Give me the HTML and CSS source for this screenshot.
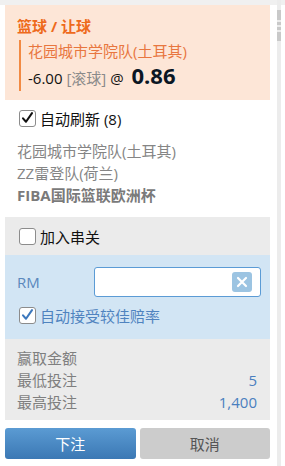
FILE: index.html
```html
<!DOCTYPE html>
<html lang="zh">
<head>
<meta charset="utf-8">
<link rel="stylesheet" href="styles.css">
</head>
<body>
<div class="topbar"></div>
<div class="panel">
  <section class="bet">
    <div class="title">篮球 / 让球</div>
    <div class="selection">
      <div class="team">花园城市学院队(土耳其)</div>
      <div class="odds-line"><span class="hdp">-6.00</span> <span class="live">[滚球]</span> <span class="at">@</span> <span class="odds">0.86</span></div>
    </div>
  </section>
  <section class="info">
    <label class="check-row"><span class="box"><svg viewBox="0 0 16 16" width="16" height="16"><path d="M3.2 8.4 L6.4 12 L12.8 2.8" fill="none" stroke="#111" stroke-width="2.2" stroke-linecap="round" stroke-linejoin="round"/></svg></span><span>自动刷新 (8)</span></label>
    <div class="match">
      <div>花园城市学院队(土耳其)</div>
      <div>ZZ雷登队(荷兰)</div>
      <div class="league">FIBA国际篮联欧洲杯</div>
    </div>
  </section>
  <section class="parlay">
    <label class="check-row"><span class="box"></span><span>加入串关</span></label>
  </section>
  <section class="stake">
    <div class="stake-row">
      <span class="rm">RM</span>
      <div class="input"><span class="clear"><svg viewBox="0 0 20 20" width="20" height="20"><path d="M6 6 L14 14 M14 6 L6 14" stroke="#fff" stroke-width="2.2" stroke-linecap="round"/></svg></span></div>
    </div>
    <label class="check-row blue"><span class="box"><svg viewBox="0 0 16 16" width="16" height="16"><path d="M3.2 8.4 L6.4 12 L12.8 2.8" fill="none" stroke="#3c78bd" stroke-width="2.2" stroke-linecap="round" stroke-linejoin="round"/></svg></span><span>自动接受较佳赔率</span></label>
  </section>
  <section class="limits">
    <div class="lim"><span>赢取金额</span><span class="val"></span></div>
    <div class="lim"><span>最低投注</span><span class="val">5</span></div>
    <div class="lim"><span>最高投注</span><span class="val">1,400</span></div>
  </section>
  <div class="buttons">
    <button class="btn primary">下注</button>
    <button class="btn secondary">取消</button>
  </div>
</div>
<div class="scrollbar">
  <div class="sb-block a"></div>
  <div class="sb-line"></div>
  <div class="sb-line"></div>
  <div class="sb-block b"></div>
</div>
</body>
</html>
```
FILE: styles.css
```css
html, body {
  margin: 0;
  padding: 0;
  background: #fff;
}
body {
  font-family: "Open Sans", "Noto Sans CJK SC", sans-serif;
  font-size: 15px;
  color: #222;
  width: 285px;
  height: 466px;
  overflow: hidden;
  position: relative;
}
.topbar {
  height: 5px;
  background: #f0f0f0;
}
.panel {
  width: 265px;
  margin-left: 5px;
}
.bet {
  background: #fde6d7;
  height: 95px;
  padding: 11px 12px 0 12px;
  box-sizing: border-box;
}
.title {
  color: #ee6a1c;
  font-weight: bold;
  font-size: 15px;
  line-height: 20px;
}
.selection {
  margin-top: 4px;
  margin-left: 2px;
  border-left: 2px solid #f28a43;
  padding-left: 7px;
}
.team {
  color: #e8763f;
  line-height: 22px;
}
.odds-line {
  line-height: 26px;
  color: #111;
  font-size: 15px;
}
.live {
  color: #8a8a8a;
}
.at {
  margin-right: 4px;
}
.odds {
  font-weight: bold;
  font-size: 22px;
  color: #0b1624;
}
.info {
  padding: 8px 12px 11px 12px;
}
.check-row {
  display: flex;
  align-items: center;
  height: 20px;
  gap: 4px;
  margin-left: 2px;
  color: #111;
}
.box {
  width: 15px;
  height: 15px;
  border: 1px solid #8c8c8c;
  border-radius: 3px;
  background: #fff;
  display: flex;
  align-items: center;
  justify-content: center;
}
.box svg {
  display: block;
}
.match {
  margin-top: 12px;
  color: #858585;
  line-height: 22px;
}
.league {
  font-weight: bold;
  color: #7a7a7a;
}
.parlay {
  background: #ebebeb;
  padding: 9px 12px;
}
.stake {
  background: #d2e5f4;
  padding: 12px 9px 14px 12px;
}
.stake-row {
  display: flex;
  align-items: center;
  justify-content: space-between;
}
.rm {
  color: #5a88bd;
}
.input {
  width: 167px;
  height: 30px;
  box-sizing: border-box;
  border: 1px solid #5b9bd5;
  border-radius: 3px;
  background: #fff;
  display: flex;
  align-items: center;
  justify-content: flex-end;
  padding-right: 8px;
}
.clear {
  width: 20px;
  height: 20px;
  border-radius: 3px;
  background: #9cc4e2;
  display: block;
}
.clear svg {
  display: block;
}
.check-row.blue {
  margin-top: 8px;
  color: #4f83bf;
}
.limits {
  background: #ebebeb;
  padding: 8px 13px 7px 12px;
  color: #7f7f7f;
}
.lim {
  display: flex;
  justify-content: space-between;
  line-height: 22px;
}
.val {
  color: #4a7fbf;
}
.buttons {
  display: flex;
  gap: 4px;
  margin-top: 8px;
}
.btn {
  flex: 1;
  height: 31px;
  border: none;
  border-radius: 3px;
  font-family: "Open Sans", "Noto Sans CJK SC", sans-serif;
  font-size: 15px;
  padding: 0;
}
.primary {
  background: linear-gradient(#5b9bd3, #3b78b4);
  color: #fff;
}
.secondary {
  background: #cccccc;
  color: #555;
}
.scrollbar {
  position: absolute;
  left: 277px;
  top: 0;
  width: 4px;
  height: 466px;
  background: #ececec;
}
.sb-block {
  background: #c9c9c9;
  width: 100%;
}
.sb-block.a {
  margin-top: 10px;
  height: 10px;
}
.sb-line {
  height: 3px;
  margin-top: 2px;
  background: #c9c9c9;
}
.sb-block.b {
  margin-top: 2px;
  height: 9px;
}
```
